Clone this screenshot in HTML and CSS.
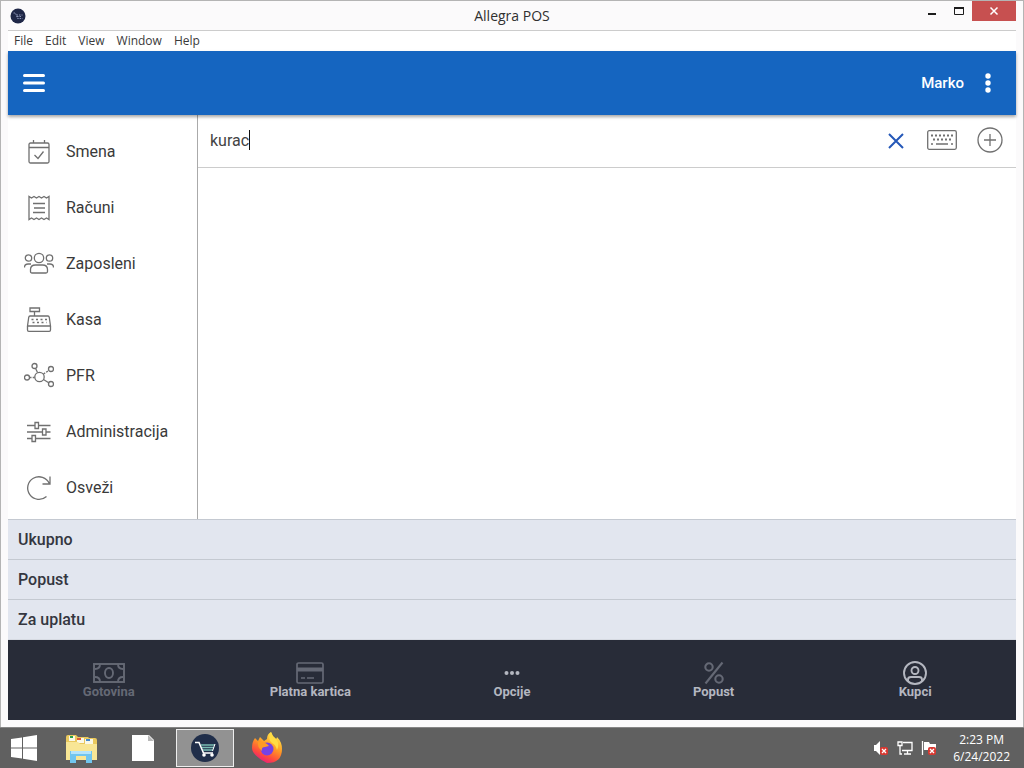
FILE: index.html
```html
<!DOCTYPE html>
<html lang="sr-Latn">
<head>
<meta charset="utf-8">
<meta name="viewport" content="width=device-width, initial-scale=1">
<title>Allegra POS</title>
<link rel="stylesheet" href="styles.css">
</head>
<body>
<div class="window">
  <header class="titlebar">
    <svg class="app-icon" viewBox="0 0 32 32" width="16" height="16"><circle cx="16" cy="16" r="15" fill="#1f2747"/><path d="M7 10h4l4 11h10M13 14h12M14 17h10" fill="none" stroke="#8d96b8" stroke-width="2" stroke-dasharray="3 2"/></svg>
    <h1 class="window-title">Allegra POS</h1>
    <div class="window-controls">
      <button class="win-button" aria-label="Minimize"><svg width="10" height="10"><path d="M1 8h8" stroke="#1c1c1c" stroke-width="2"/></svg></button>
      <button class="win-button" aria-label="Maximize"><svg width="10" height="10"><path d="M.5 1.500v7h9v-7" fill="none" stroke="#1c1c1c"/><path d="M0 2h10" stroke="#1c1c1c" stroke-width="2"/></svg></button>
      <button class="win-button close" aria-label="Close"><svg width="10" height="10"><path d="M1.500 1.500l7 7M8.500 1.500l-7 7" stroke="#fff" stroke-width="1.500"/></svg></button>
    </div>
  </header>
  <div class="app">
    <nav class="menubar" aria-label="Menu">
      <button>File</button><button>Edit</button><button>View</button><button>Window</button><button>Help</button>
    </nav>
    <div class="toolbar">
      <button class="icon-button" aria-label="Meni"><svg width="22" height="20" viewBox="0 0 22 20"><path d="M1.500 2.500h19M1.500 10h19M1.500 17.500h19" stroke="#fff" stroke-width="3" stroke-linecap="round"/></svg></button>
      <div class="user">
        <span>Marko</span>
        <button class="icon-button" aria-label="Više"><svg width="8" height="20" viewBox="0 0 8 20" fill="#fff"><circle cx="4" cy="3" r="2.700"/><circle cx="4" cy="10" r="2.700"/><circle cx="4" cy="17" r="2.700"/></svg></button>
      </div>
    </div>
    <div class="workspace">
      <nav class="sidebar" aria-label="Navigacija">
        <a href="#smena"><svg class="line-icon" viewBox="0 0 30 30"><rect x="5" y="6" width="20" height="20" rx="1.500"/><path d="M5 10.500h20M9.500 6V3M20.500 6V3M10.500 18l3.500 3.500 5.500-7"/></svg>Smena</a>
        <a href="#racuni"><svg class="line-icon" viewBox="0 0 30 30"><path d="M5 3.500v23l2.500-1.500 2.500 1.500 2.500-1.500 2.500 1.500 2.500-1.500 2.500 1.500 2.500-1.500 2.500 1.500v-23l-2.500 1.500-2.500-1.500-2.500 1.500-2.500-1.500-2.500 1.500-2.500-1.500-2.500 1.500zM9 10.500h12M10 15h11M9 19.500h12"/></svg>Računi</a>
        <a href="#zaposleni"><svg class="line-icon" viewBox="0 0 30 30"><circle cx="15" cy="9" r="4.700"/><circle cx="4.500" cy="9" r="3.200"/><circle cx="25.500" cy="9" r="3.200"/><path d="M6.500 22.500v-2q0-4.500 5-4.500h7q5 0 5 4.500v2q0 1.500-1.500 1.500h-14q-1.500 0-1.500-1.500zM.5 18.500q0-3.500 3.500-3.500h3M29.500 18.500q0-3.500-3.500-3.500h-3"/></svg>Zaposleni</a>
        <a href="#kasa"><svg class="line-icon" viewBox="0 0 30 30"><path d="M6 3h9.500v3.500H6zM10.500 6.500v4.500M6 11h18q1 0 1.300 1.500l1.200 8.500h-23l1.200-8.500Q5 11 6 11zM3.500 21v4q0 1.300 1.300 1.300h20.400q1.300 0 1.300-1.300v-4"/><path d="M7.500 14.500h16M8.500 17.500h14" stroke-dasharray="2 2.500" stroke-width="1.700"/></svg>Kasa</a>
        <a href="#pfr"><svg class="line-icon" viewBox="0 0 30 30"><circle cx="15.500" cy="16" r="4.700"/><circle cx="3" cy="16.500" r="2.500"/><circle cx="10.500" cy="5" r="2.500"/><circle cx="27" cy="8" r="2.500"/><circle cx="27" cy="23" r="2.500"/><path d="M11.500 7.300l2 4.200M19.500 18.500l5.200 3.200"/><path d="M19.500 13l5.300-3.500M5.500 16.500h5.300" stroke-dasharray="2 1.200"/></svg>PFR</a>
        <a href="#administracija"><svg class="line-icon" viewBox="0 0 30 30"><path d="M3 8.500h8M14.500 8.500h12M3 15h15.500M22 15h4.500M3 21.500h5M11.500 21.500h15"/><path d="M11 5.500h3.500v6H11zM18.500 12H22v6h-3.500zM8 18.500h3.500v6H8z"/></svg>Administracija</a>
        <a href="#osvezi"><svg class="line-icon" viewBox="0 0 30 30"><path d="M22.500 23.500a11.300 11.300 0 1 1 2.800-13M26 3.500v7.500h-7.500"/></svg>Osveži</a>
      </nav>
      <main class="content">
        <div class="search">
          <div class="search-field"><input class="search-input" type="text" value="kurac" size="5" aria-label="Pretraga"><span class="caret"></span></div>
          <button class="icon-button" aria-label="Obriši"><svg width="22" height="20" viewBox="0 0 22 20"><path d="M4 4l14 14M18 4l-14 14" stroke="#2558b8" stroke-width="2"/></svg></button>
          <button class="icon-button" aria-label="Tastatura"><svg width="30" height="20" viewBox="0 0 30 20" fill="none" stroke="#707070"><rect x=".7" y=".7" width="28.600" height="18.600" rx="1.500" stroke-width="1.300"/><path d="M4 5.500h22M6 9.500h18" stroke-width="2" stroke-dasharray="2 2"/><path d="M4 14h2M9 14h12M24 14h2" stroke-width="1.500"/></svg></button>
          <button class="icon-button" aria-label="Dodaj"><svg width="26" height="26" viewBox="0 0 26 26" fill="none" stroke="#707070" stroke-width="1.300"><circle cx="13" cy="13" r="12"/><path d="M13 7v12M7 13h12"/></svg></button>
        </div>
      </main>
    </div>
    <section class="totals">
      <div>Ukupno</div>
      <div>Popust</div>
      <div>Za uplatu</div>
    </section>
    <footer class="actions">
      <button disabled><svg width="32" height="24" viewBox="0 0 32 24" fill="none" stroke="currentColor" stroke-width="1.900"><rect x="1" y="3" width="30" height="18"/><ellipse cx="16" cy="12" rx="4" ry="5"/><path d="M2 8q5 0 5-5M30 8q-5 0-5-5M2 16q5 0 5 5M30 16q-5 0-5 5"/></svg>Gotovina</button>
      <button><svg class="dim" width="28" height="24" viewBox="0 0 28 24" fill="none" stroke="currentColor"><rect x="1" y="2" width="26" height="20" rx="1.500" stroke-width="1.700"/><path d="M1 8.500h26" stroke-width="4"/><path d="M5 17h4M11 17h7" stroke-width="1.700"/></svg>Platna kartica</button>
      <button><svg width="16" height="24" viewBox="0 0 16 24" fill="currentColor"><circle cx="2.500" cy="12" r="2"/><circle cx="8" cy="12" r="2"/><circle cx="13.500" cy="12" r="2"/></svg>Opcije</button>
      <button><svg class="dim" width="24" height="24" viewBox="0 0 24 24" fill="none" stroke="currentColor" stroke-width="2.100"><circle cx="7" cy="6" r="3.700"/><circle cx="17" cy="18" r="3.700"/><path d="M20.500 1.500l-17 21"/></svg>Popust</button>
      <button><svg width="26" height="24" viewBox="0 0 26 24" fill="none" stroke="currentColor" stroke-width="1.900"><circle cx="13" cy="12" r="11"/><circle cx="13" cy="9.500" r="3.500"/><path d="M6 20v-1.500q0-2.500 3-2.500h8q3 0 3 2.500v1.500"/></svg>Kupci</button>
    </footer>
  </div>
</div>
<div class="taskbar">
  <div class="tasks">
    <button class="start" aria-label="Start"><svg width="28" height="26" viewBox="0 0 28 26" fill="#fff"><path d="M1 4l11-1.600v10H1zM13 2.200L27 0v12.400H13zM1 13.400h11v10.200L1 22zM13 13.400h14V26l-14-2.200z"/></svg></button>
    <button class="task" aria-label="Explorer"><svg width="34" height="32" viewBox="0 0 34 32"><path d="M2 28V5q0-2 2-2h8l2 2h10l1 1h6q2 0 2 2v20z" fill="#e9c85d"/><path d="M5 4h6v5H5zM13 6h7v5h-7zM21 7h8v5h-8z" fill="#faf8e7"/><path d="M6 4h3v2H6z" fill="#29a14a"/><path d="M13 6h4v2h-4z" fill="#dd5939"/><path d="M22 7h4v2h-4z" fill="#4689cd"/><path d="M2 10h12l2 2h17v16H2z" fill="#f8e695"/><path d="M6 31V19h22v12h-6v-7H12v7z" fill="#70c5ef"/><path d="M7 19h20v3H7z" fill="#b4e4fb"/></svg></button>
    <button class="task" aria-label="Dokument"><svg width="24" height="28" viewBox="0 0 24 28"><path d="M1 1h17l5 5v21H1z" fill="#fff"/><path d="M17 1v6h6z" fill="#b8b8b8"/></svg></button>
    <button class="task current" aria-label="Allegra POS"><svg width="30" height="30" viewBox="0 0 30 30" fill="none"><circle cx="15" cy="15" r="14" fill="#202e4a"/><path d="M5 9.500h4l4.500 10.500H23" stroke="#fff" stroke-width="1.600"/><path d="M11 12h14M12 14.500h12M13 17h10" stroke="#79bcb4" stroke-width="1.400"/><path d="M25 11l-2.500 7" stroke="#fff"/><g fill="#fff"><circle cx="14" cy="22" r="1.800"/><circle cx="22" cy="22" r="1.800"/></g></svg></button>
    <button class="task" aria-label="Firefox"><svg width="32" height="32" viewBox="0 0 32 32"><defs><linearGradient id="fire" x1=".8" y1="0" x2=".3" y2="1"><stop stop-color="#fff44f"/><stop offset=".45" stop-color="#ff9a25"/><stop offset=".75" stop-color="#ff4a3d"/><stop offset="1" stop-color="#e31587"/></linearGradient></defs><path d="M4 6l3 3 2-4 4 4 3-2q0-5 4-7 1 4 5 7 1-1 1-2 5 5 5 12 0 14-15 14S1 24 1 16Q1 10 4 6z" fill="url(#fire)"/><circle cx="16" cy="17" r="6.500" fill="#7542e5"/><path d="M7 10q5-1 9 2l2 2-4 1q-4 0-3 4-5-4-4-9z" fill="#ff9a25"/><path d="M20 0q1 4 5 7 4 5 1 11-1-5-5-7-5-4-1-11z" fill="#ffdc44"/></svg></button>
  </div>
  <div class="tray">
    <button aria-label="Zvuk"><svg width="16" height="16" viewBox="0 0 16 16"><path d="M1 5h2l4-4v14l-4-4H1z" fill="#fff"/><rect x="7" y="7" width="8" height="8" rx="2" fill="#d73932"/><path d="M9 9l4 4M13 9l-4 4" stroke="#fff" stroke-width="1.300"/></svg></button>
    <button aria-label="Mreža"><svg width="16" height="16" viewBox="0 0 16 16" fill="none" stroke="#fff" stroke-width="1.300"><path d="M6 2.500h9v8H5M7 14h7M10.500 11v3M1 2h4v3.500H1zM3 5.500V14h2"/></svg></button>
    <button aria-label="Obaveštenja"><svg width="16" height="16" viewBox="0 0 16 16"><path d="M1.500 1v14" stroke="#fff" stroke-width="1.300"/><path d="M3 2h5l1 2h6v6H3z" fill="#fff"/><rect x="7" y="7" width="8" height="8" rx="2" fill="#d73932"/><path d="M9 9l4 4M13 9l-4 4" stroke="#fff" stroke-width="1.300"/></svg></button>
    <div class="clock"><span>2:23 PM</span><span>6/24/2022</span></div>
  </div>
</div>
</body>
</html>
```
FILE: styles.css
```css
* { box-sizing: border-box; }
body {
  margin: 0;
  min-height: 100vh;
  display: flex;
  flex-direction: column;
  font: 16px/24px Roboto, sans-serif;
  color: #3a3a3a;
}
button {
  border: 0;
  padding: 0;
  background: none;
  font: inherit;
  color: inherit;
}
svg { display: block; flex: none; }
h1 { margin: 0; }

.window {
  flex: 1;
  display: flex;
  flex-direction: column;
  padding: 0 7px 7px;
  border: 1px solid #b4b4b4;
  border-bottom: 0;
  background: #fbfafb;
}
.titlebar {
  display: grid;
  grid-template-columns: 1fr auto 1fr;
  align-items: center;
  height: 29px;
}
.app-icon { margin-left: 2px; }
.window-title {
  font: 400 14px/20px "Open Sans", sans-serif;
  color: #303030;
}
.window-controls {
  align-self: start;
  display: flex;
  justify-content: flex-end;
}
.win-button {
  display: grid;
  place-items: center;
  width: 27px;
  height: 20px;
}
.win-button.close { width: 44px; background: #c75050; }

.app {
  flex: 1;
  display: flex;
  flex-direction: column;
  border-top: 1px solid #ccc;
  background: #fff;
}
.menubar {
  display: flex;
  height: 20px;
  font: 12px/20px "Open Sans", sans-serif;
}
.menubar button { padding: 0 6px; }
.toolbar {
  display: flex;
  align-items: center;
  justify-content: space-between;
  height: 64px;
  padding: 0 24px 0 15px;
  background: #1565c0;
  color: #fff;
  box-shadow: 0 2px 3px rgba(0, 0, 0, .35);
  z-index: 1;
}
.user {
  display: flex;
  align-items: center;
  gap: 20px;
  font-size: 15px;
  font-weight: 500;
}
.workspace { flex: 1; display: flex; }
.sidebar {
  flex: none;
  width: 190px;
  padding: 9px 0 3px;
  border-right: 1px solid #aaa;
}
.sidebar a {
  display: flex;
  align-items: center;
  gap: 12px;
  height: 56px;
  padding-left: 16px;
  color: #3a3a3a;
  text-decoration: none;
}
.line-icon {
  width: 30px;
  height: 30px;
  fill: none;
  stroke: #707070;
  stroke-width: 1.3;
}
.content { flex: 1; }
.search {
  display: flex;
  align-items: center;
  gap: 20px;
  height: 53px;
  padding: 0 13px 2px 12px;
  border-bottom: 1px solid #ccc;
}
.search-field { flex: 1; display: flex; align-items: center; }
.search-input {
  field-sizing: content;
  border: 0;
  padding: 2px 0 0;
  outline: 0;
  background: none;
  font: inherit;
  color: #444;
}
.caret { width: 1px; height: 20px; background: #111; }

.totals {
  border-bottom: 1px solid #d6dae2;
  background: #e2e6ef;
  font-weight: 500;
  color: #343640;
}
.totals div {
  height: 40px;
  padding: 8px 10px 7px;
  border-top: 1px solid #c4c9d1;
}
.actions {
  display: grid;
  grid-template-columns: repeat(5, 1fr);
  height: 80px;
  background: #282c38;
  color: #b4b7c0;
  font-size: 13px;
  font-weight: 700;
  line-height: 14px;
}
.actions button {
  display: flex;
  flex-direction: column;
  align-items: center;
  justify-content: center;
}
.actions button:disabled, .dim { color: #656975; }

.taskbar {
  display: flex;
  justify-content: space-between;
  height: 41px;
  background: #606060;
  border-top: 1px solid #858585;
}
.tasks, .tray { display: flex; align-items: center; }
.start { padding: 0 12px 0 10px; }
.task {
  display: grid;
  place-items: center;
  width: 62px;
  height: 38px;
}
.tasks .current {
  width: 58px;
  margin: 0 2px;
  border: 1px solid #eee;
  background: #929292;
}
.tray { gap: 8px; padding-right: 14px; }
.clock {
  display: flex;
  flex-direction: column;
  align-items: center;
  margin-left: 8px;
  font: 12px/17px "Open Sans", sans-serif;
  color: #fff;
}
```
